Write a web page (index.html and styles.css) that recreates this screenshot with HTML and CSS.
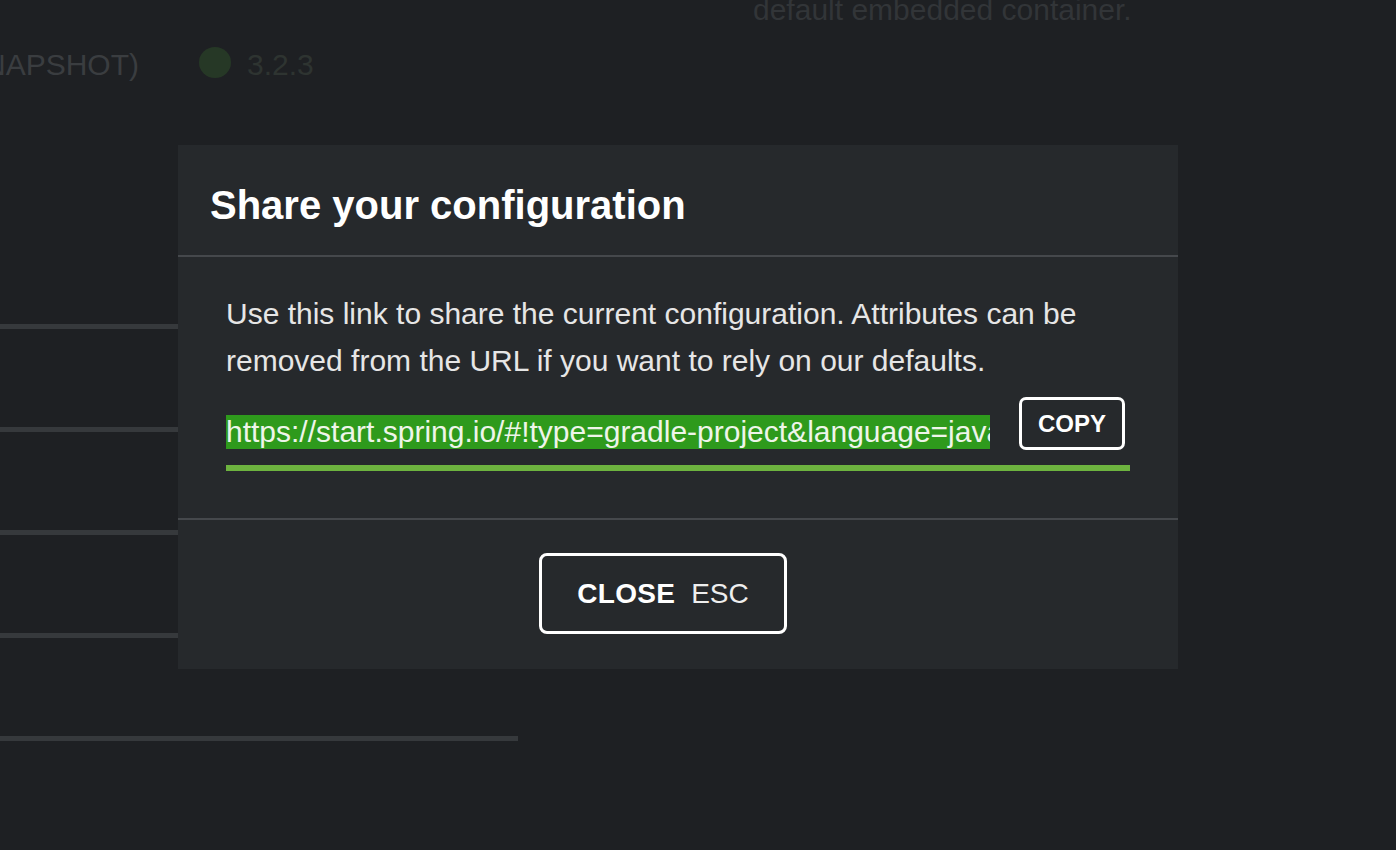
FILE: index.html
```html
<!DOCTYPE html>
<html lang="en">
<head>
<meta charset="utf-8">
<title>Share your configuration</title>
<link rel="stylesheet" href="styles.css">
</head>
<body>
<div class="page">
  <div class="desc">default embedded container.</div>
  <div class="versions">
    <span class="ver-text cut">NAPSHOT)</span>
    <span class="radio"></span>
    <span class="ver-text dim">3.2.3</span>
  </div>
  <div class="rules">
    <div class="rule"></div>
    <div class="rule"></div>
    <div class="rule"></div>
    <div class="rule"></div>
    <div class="rule"></div>
  </div>
</div>

<div class="modal">
  <div class="modal-header">
    <h2 class="modal-title">Share your configuration</h2>
  </div>
  <div class="modal-body">
    <p class="modal-text">Use this link to share the current configuration. Attributes can be removed from the URL if you want to rely on our defaults.</p>
    <div class="url-field">
      <div class="url-box"><span class="url-sel">https://start.spring.io/#!type=gradle-project&amp;language=java&amp;platformVersion=3.2.3&amp;packaging=jar</span></div>
      <button class="copy-btn">COPY</button>
    </div>
  </div>
  <div class="modal-footer">
    <button class="close-btn"><span class="close-label">CLOSE</span><span class="close-key">ESC</span></button>
  </div>
</div>
</body>
</html>
```

FILE: styles.css
```css
* { box-sizing: border-box; }

html, body {
  margin: 0;
  padding: 0;
  width: 1396px;
  height: 850px;
  overflow: hidden;
  background: #1e2023;
  font-family: "Liberation Sans", Arial, Helvetica, sans-serif;
}

.page {
  display: flex;
  flex-direction: column;
}

.desc {
  margin-left: 753px;
  margin-top: -4px;
  font-size: 30px;
  line-height: 28px;
  color: #323538;
  white-space: nowrap;
}

.versions {
  display: flex;
  align-items: flex-start;
  margin-top: 23px;
  height: 32px;
}

.ver-text {
  font-size: 30px;
  line-height: 28px;
  padding-top: 4px;
  white-space: nowrap;
}

.cut {
  margin-left: -16px;
  color: #3a3d40;
}

.radio {
  width: 32px;
  height: 31px;
  border-radius: 50%;
  background: #263826;
  margin-left: 60px;
}

.dim {
  margin-left: 16px;
  color: #2e3431;
}

.rules {
  display: flex;
  flex-direction: column;
  gap: 98px;
  margin-top: 245px;
}

.rule {
  width: 518px;
  height: 5px;
  background: #36393c;
}

/* Modal overlay */
.modal {
  position: absolute;
  left: 178px;
  top: 145px;
  width: 1000px;
  height: 524px;
  background: #26292c;
  display: flex;
  flex-direction: column;
}

.modal-header {
  height: 112px;
  padding: 37px 32px 0;
  border-bottom: 2px solid #45484c;
}

.modal-title {
  margin: 0;
  font-size: 40px;
  line-height: 46px;
  font-weight: bold;
  color: #ffffff;
  white-space: nowrap;
}

.modal-body {
  padding: 33px 48px 47px;
  border-bottom: 2px solid #45484c;
}

.modal-text {
  margin: 0 0 13px;
  font-size: 30px;
  line-height: 47px;
  color: #e6e6e6;
}

.url-field {
  display: flex;
  align-items: flex-end;
  padding-bottom: 15px;
  border-bottom: 6px solid #6db33f;
}

.url-box {
  width: 764px;
  overflow: hidden;
  white-space: nowrap;
  font-size: 30px;
  line-height: 34px;
  margin-bottom: 1px;
}

.url-sel {
  background: #2e9a1c;
  color: #eef5ea;
  padding: 1px 0;
}

.copy-btn {
  margin-left: 29px;
  width: 106px;
  height: 53px;
  border: 3px solid #ffffff;
  border-radius: 7px;
  background: transparent;
  color: #ffffff;
  font-family: inherit;
  font-size: 24px;
  font-weight: bold;
  padding: 0;
}

.modal-footer {
  flex: 1;
  display: flex;
  justify-content: center;
  align-items: flex-start;
  padding: 33px 30px 0 0;
}

.close-btn {
  height: 81px;
  width: 248px;
  border: 3px solid #ffffff;
  border-radius: 8px;
  background: transparent;
  color: #ffffff;
  font-family: inherit;
  font-size: 28px;
  padding: 0;
  display: flex;
  align-items: center;
  justify-content: center;
}

.close-label {
  font-weight: bold;
  letter-spacing: 0.3px;
}

.close-key {
  margin-left: 16px;
  color: #eeeeee;
}
```
